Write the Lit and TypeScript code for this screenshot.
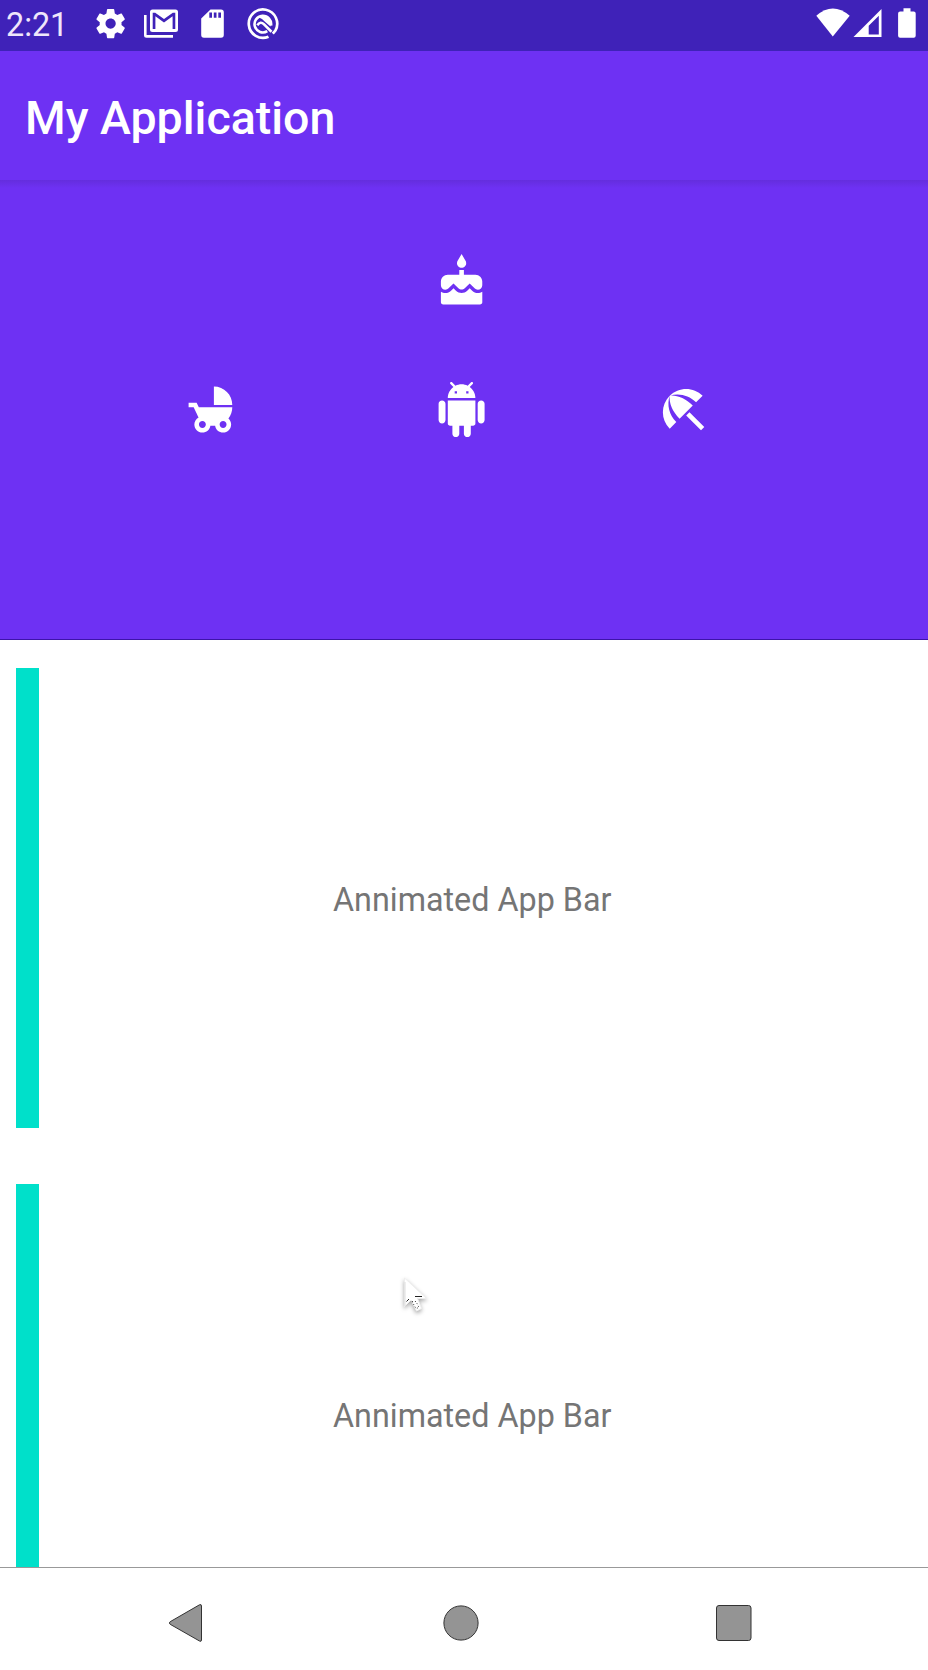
import { LitElement, html, css, svg } from "lit";
import { customElement, property } from "lit/decorators.js";

const ICONS: Record<string, string> = {
  cake: "M12 6c1.11 0 2-.9 2-2 0-.38-.1-.73-.29-1.03L12 0l-1.71 2.97c-.19.3-.29.65-.29 1.03 0 1.1.9 2 2 2zm4.6 9.99l-1.07-1.07-1.08 1.07c-1.3 1.3-3.58 1.31-4.89 0l-1.07-1.07-1.09 1.07C6.75 16.64 5.88 17 4.96 17c-.73 0-1.4-.23-1.96-.61V21c0 .55.45 1 1 1h16c.55 0 1-.45 1-1v-4.61c-.56.38-1.23.61-1.96.61-.92 0-1.79-.36-2.44-1.01zM18 9h-5V7h-2v2H6c-1.66 0-3 1.34-3 3v1.54c0 1.08.88 1.96 1.96 1.96.52 0 1.02-.2 1.38-.57l2.14-2.13 2.13 2.13c.74.74 2.03.74 2.77 0l2.14-2.13 2.13 2.13c.37.37.86.57 1.38.57 1.08 0 1.96-.88 1.96-1.96V12C21 10.34 19.66 9 18 9z",
  stroller: "M13 2v8h8c0-4.42-3.58-8-8-8zm6.32 13.89C20.37 14.54 21 12.84 21 11H6.44l-.95-2H2v2h2.22s1.89 4.07 2.12 4.42c-1.1.59-1.84 1.75-1.84 3.08C4.5 20.43 6.07 22 8 22c1.76 0 3.22-1.3 3.46-3h2.08c.24 1.7 1.7 3 3.46 3 1.93 0 3.5-1.57 3.5-3.5 0-1.04-.46-1.97-1.18-2.61zM8 20c-.83 0-1.5-.67-1.5-1.5S7.17 17 8 17s1.5.67 1.5 1.5S8.83 20 8 20zm9 0c-.83 0-1.5-.67-1.5-1.5s.67-1.5 1.5-1.5 1.5.67 1.5 1.5-.67 1.5-1.5 1.5z",
  android: "M6 18c0 .55.45 1 1 1h1v3.5c0 .83.67 1.5 1.5 1.5s1.5-.67 1.5-1.5V19h2v3.5c0 .83.67 1.5 1.5 1.5s1.5-.67 1.5-1.5V19h1c.55 0 1-.45 1-1V8H6v10zM3.5 8C2.67 8 2 8.67 2 9.5v7c0 .83.67 1.5 1.5 1.5S5 17.33 5 16.5v-7C5 8.67 4.33 8 3.5 8zm17 0c-.83 0-1.5.67-1.5 1.5v7c0 .83.67 1.5 1.5 1.5s1.5-.67 1.5-1.5v-7c0-.83-.67-1.5-1.5-1.5zm-4.97-5.84l1.3-1.3c.2-.2.2-.51 0-.71-.2-.2-.51-.2-.71 0l-1.48 1.48C13.85 1.23 12.95 1 12 1c-.96 0-1.86.23-2.66.63L7.85.15c-.2-.2-.51-.2-.71 0-.2.2-.2.51 0 .71l1.31 1.31C6.97 3.26 6 5.01 6 7h12c0-1.99-.97-3.75-2.47-4.84zM10 5H9V4h1v1zm5 0h-1V4h1v1z",
  beach: "M13.127 14.56l1.43-1.43 6.44 6.443L19.57 21zm4.293-5.73l2.86-2.86c-3.95-3.95-10.35-3.96-14.3-.02 3.93-1.3 8.31-.25 11.44 2.88zM5.95 5.98c-3.94 3.95-3.93 10.35.02 14.3l2.86-2.86C5.7 14.29 4.65 9.91 5.95 5.98zm.02-.02l-.01.01c-.38 3.01 1.17 6.88 4.3 10.02l5.73-5.73c-3.13-3.13-7.01-4.68-10.02-4.3z",
};

@customElement("status-bar")
class StatusBar extends LitElement {
  static styles = css`
    :host { display: flex; align-items: center; height: 51px; background: #3f22b8; color: #fff; box-sizing: border-box; padding-left: 6px; }
    .time { font: 400 32.300px/48px Roboto, sans-serif; width: 85px; height: 50px; color: #efe6fb; }
    svg { display: block; flex: none; fill: #fff; }
    .system { margin-left: auto; }
  `;
  render() {
    return html`
      <span class="time">2:21</span>
      <svg width="200" height="51" viewBox="91 0 200 51">
        <path transform="translate(93.1 6.1) scale(1.46)" d="M19.43 12.98c.04-.32.07-.64.07-.98s-.03-.66-.07-.98l2.11-1.65c.19-.15.24-.42.12-.64l-2-3.46c-.12-.22-.39-.3-.61-.22l-2.49 1c-.52-.4-1.08-.73-1.69-.98l-.38-2.65C14.46 2.18 14.25 2 14 2h-4c-.25 0-.46.18-.49.42l-.38 2.65c-.61.25-1.17.59-1.69.98l-2.49-1c-.23-.09-.49 0-.61.22l-2 3.46c-.13.22-.07.49.12.64l2.11 1.65c-.04.32-.07.65-.07.98s.03.66.07.98l-2.11 1.65c-.19.15-.24.42-.12.64l2 3.46c.12.22.39.3.61.22l2.49-1c.52.4 1.08.73 1.69.98l.38 2.65c.03.24.24.42.49.42h4c.25 0 .46-.18.49-.42l.38-2.65c.61-.25 1.17-.59 1.69-.98l2.49 1c.23.09.49 0 .61-.22l2-3.46c.12-.22.07-.49-.12-.64l-2.11-1.65zM12 15.5c-1.93 0-3.5-1.57-3.5-3.5s1.57-3.5 3.5-3.5 3.5 1.57 3.5 3.5-1.57 3.5-3.5 3.5z"/>
        <path d="M152.500 9.500h23a2.500 2.500 0 0 1 2.500 2.500v17.500a2.500 2.500 0 0 1-2.500 2.500h-23a2.500 2.500 0 0 1-2.500-2.500V12a2.500 2.500 0 0 1 2.500-2.500zM152.700 12.700v16.400h2.700V16.200l8.600 6.300 8.600-6.300v12.900h2.700V12.700h-2.500L164 18.900l-8.800-6.200z" fill-rule="evenodd"/>
        <path d="M144 15h2.600v20H173v2.700h-26.500a2.500 2.500 0 0 1-2.500-2.500z"/>
        <path d="M210.500 9.500H221a2.800 2.800 0 0 1 2.800 2.800v22.500a2.800 2.800 0 0 1-2.800 2.900h-17a2.800 2.800 0 0 1-2.800-2.900V18.500zM209.300 12.500v5.300h2.700v-5.300zm4.500 0v5.300h2.700v-5.300zm4.500 0v5.300h2.700v-5.300z" fill-rule="evenodd"/>
        <g fill="none" stroke="#fff">
          <path stroke-width="2.700" d="M268.500 36.700A14.200 14.200 0 1 1 275.400 30.500L272.800 33.700"/>
          <path stroke-width="2.600" d="M267.300 31.100A8.300 8.300 0 1 1 271 25.600"/>
          <path stroke-width="2.600" d="M257.300 25.300Q260.500 20.800 263.800 24.200L271.500 31.800"/>
        </g>
        <path d="M258.500 17.300Q264.500 13.500 269.500 18.500Q272.300 22 270.500 26.500L265.500 22.200Q262 18.500 258.500 17.300z"/>
      </svg>
      <svg class="system" width="120" height="51" viewBox="808 0 120 51">
        <path d="M816.300 15.700Q832.800 1.200 849.700 15.700L832.800 36.500z"/>
        <path fill-rule="evenodd" d="M881.500 9v28H853.500zM878.800 15.700L868.700 25.800V34.500h10.100z"/>
        <path d="M903.500 8.300h7v3.200h3.200a2 2 0 0 1 2 2v22.200a2 2 0 0 1-2 2h-13.600a2 2 0 0 1-2-2V13.500a2 2 0 0 1 2-2h3.400z"/>
      </svg>`;
  }
}

@customElement("md-icon")
class MdIcon extends LitElement {
  @property() name = "cake";
  static styles = css`
    :host { display: block; width: 55.200px; height: 55.200px; }
    .glyph { display: block; width: 100%; height: 100%; fill: #fff; }
  `;
  render() {
    return html`<svg class="glyph" viewBox="0 0 24 24">${svg`<path d=${ICONS[this.name]}></path>`}</svg>`;
  }
}

@customElement("list-row")
class ListRow extends LitElement {
  @property() label = "";
  static styles = css`
    :host { display: flex; height: 460px; margin-bottom: 56px; padding-left: 16px; box-sizing: border-box; flex: none; }
    .accent { width: 23px; background: #00e0ca; flex: none; }
    .label { flex: 1; display: flex; align-items: center; justify-content: center; padding: 4px 22.500px 0 0;
      font: 400 32.300px/40px Roboto, sans-serif; color: #757575; white-space: nowrap; }
  `;
  render() {
    return html`<div class="accent"></div><div class="label"><span>${this.label}</span></div>`;
  }
}

@customElement("app-root")
class AppRoot extends LitElement {
  static styles = css`
    :host { display: flex; flex-direction: column; height: 1670px; overflow: hidden; background: #fff; font-family: Roboto, sans-serif; }
    .toolbar { height: 129px; flex: none; box-sizing: border-box; padding-left: 25px; background: #6e31f3; color: #fff;
      font-size: 46.500px; font-weight: 500; line-height: 134px; white-space: nowrap; }
    .scene { height: 460px; flex: none; box-sizing: border-box; padding: 73.500px 0 0 183.500px; border-bottom: 1px solid #3d14a8;
      background: linear-gradient(#642ddd, #6e31f3 8px);
      display: grid; grid-template-columns: 250.300px 222.400px 56px; grid-template-rows: 128.500px 56px; }
    .top { grid-column: 2; }
    .first { grid-column: 1; }
    .list { height: 927px; flex: none; overflow: hidden; box-sizing: border-box; padding-top: 28px; display: flex; flex-direction: column; }
    .nav { flex: 1; border-top: 1px solid #999; }
    .nav svg { display: block; fill: #949494; stroke: #333; stroke-width: 1; }
    .pointer { position: absolute; left: 399px; top: 1273px; filter: drop-shadow(0 2px 2px rgba(0,0,0,.35)); }
  `;
  render() {
    return html`
      <status-bar></status-bar>
      <div class="toolbar">My Application</div>
      <div class="scene">
        <md-icon class="top" name="cake"></md-icon>
        <md-icon class="first" name="stroller"></md-icon>
        <md-icon name="android"></md-icon>
        <md-icon name="beach"></md-icon>
      </div>
      <div class="list">
        <list-row label="Annimated App Bar"></list-row>
        <list-row label="Annimated App Bar"></list-row>
      </div>
      <div class="nav">
        <svg width="928" height="102" viewBox="0 1568 928 102">
          <path d="M170.200 1621.700L199.500 1604.800Q201.500 1604 201.500 1606V1640Q201.500 1642 199.500 1641L170.200 1624.300Q168.500 1623 170.200 1621.700z"/>
          <circle cx="461" cy="1623" r="17.100"/>
          <rect x="716.500" y="1605.500" width="34.500" height="35" rx="2.500"/>
        </svg>
      </div>
      <svg class="pointer" width="32" height="44" viewBox="0 0 32 44">
        <path d="M5.500 5V33.500L12 27l5.500 11 5-2.500-4-10h9z" fill="#fff" stroke="#eee" stroke-width="1"/>
        <path d="M6 9V33" stroke="#ddd" fill="none"/>
        <path d="M16 23.500h7M7.500 28.500l2.500-2.500" stroke="#222" fill="none"/>
        <path d="M13 28.500l4 7 3-1-3-6z" stroke="#444" stroke-dasharray="1 2" fill="none"/>
      </svg>`;
  }
}
